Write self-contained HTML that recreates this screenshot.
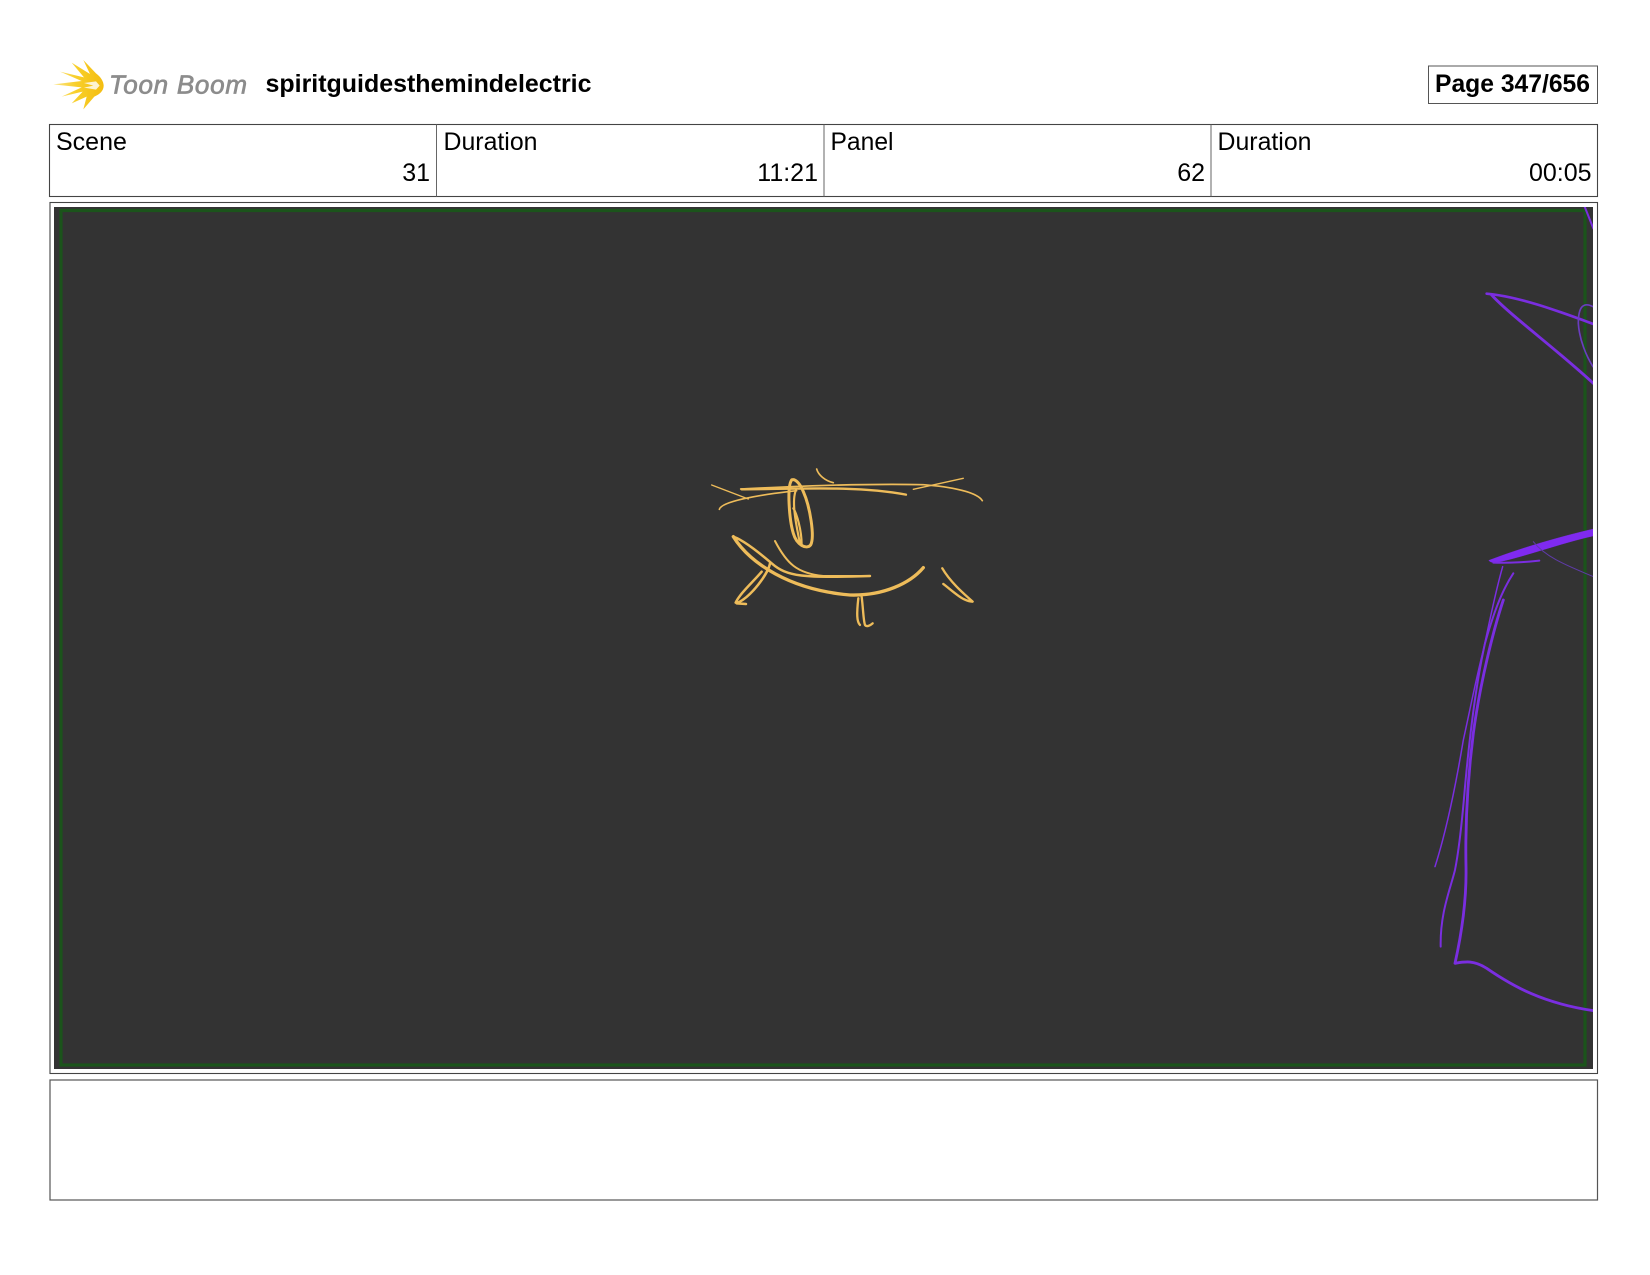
<!DOCTYPE html>
<html><head><meta charset="utf-8"><style>
html,body{margin:0;padding:0;background:#fff;width:1650px;height:1275px;overflow:hidden}
svg{display:block}
text{font-family:"Liberation Sans",sans-serif;fill:#000}
.s{font-size:25px}
.b{font-size:25px;font-weight:bold}
.y path{fill:none;stroke:#eebc5a;stroke-linecap:round;stroke-linejoin:round}
.p path{fill:none;stroke:#7a2de0;stroke-linecap:round;stroke-linejoin:round}
</style></head><body>
<svg width="1650" height="1275" viewBox="0 0 1650 1275" xmlns="http://www.w3.org/2000/svg">
<defs>
<clipPath id="c"><rect x="54" y="207" width="1539" height="862"/></clipPath>
<linearGradient id="g" x1="0" x2="1" y1="0" y2="0"><stop offset="0" stop-color="#fbe58a"/><stop offset=".45" stop-color="#f8cf2a"/><stop offset="1" stop-color="#f4bd10"/></linearGradient>
<filter id="bl" x="-10%" y="-10%" width="120%" height="120%"><feGaussianBlur stdDeviation=".6"/></filter>
<filter id="bs" x="-5%" y="-5%" width="110%" height="110%"><feGaussianBlur stdDeviation=".35"/></filter>
</defs>
<rect width="1650" height="1275" fill="#fff"/>

<!-- logo -->
<g transform="translate(40,50) scale(.3333)" filter="url(#bl)">
<path fill="url(#g)" d="M40 103 L125 93 L60 65 L132 82 L95 38 L150 72 L130 30 L168 70 C182 80 191 95 191 107 C191 122 180 133 163 140 L130 178 L140 140 L95 160 L128 125 L65 140 L125 112 Z"/>
<path fill="#fff" d="M132 99 L168 94 L179 107 L168 119 L132 113 L160 107 Z" opacity=".8"/>
</g>
<text x="109" y="93.500" font-size="26" font-style="italic" textLength="138" lengthAdjust="spacing" filter="url(#bs)" style="fill:#8c8c8c;stroke:#8c8c8c;stroke-width:.7">Toon Boom</text>

<text class="b" x="265.500" y="92" textLength="326" lengthAdjust="spacingAndGlyphs">spiritguidesthemindelectric</text>

<rect x="1428.500" y="66" width="169" height="37.500" fill="none" stroke="#555" stroke-width="1"/>
<text class="b" x="1435" y="92" textLength="155" lengthAdjust="spacingAndGlyphs">Page 347/656</text>

<!-- info table -->
<rect x="49.500" y="124.500" width="1548" height="72" fill="none" stroke="#444" stroke-width="1.100"/>
<path d="M436.500 124.500V196.500M824 124.500V196.500M1211 124.500V196.500" stroke="#666" stroke-width="1" fill="none"/>
<text class="s" x="56" y="150">Scene</text>
<text class="s" x="443.500" y="150" textLength="94" lengthAdjust="spacingAndGlyphs">Duration</text>
<text class="s" x="830.500" y="150" textLength="63" lengthAdjust="spacingAndGlyphs">Panel</text>
<text class="s" x="1217.500" y="150" textLength="94" lengthAdjust="spacingAndGlyphs">Duration</text>
<text class="s" x="430" y="181" text-anchor="end">31</text>
<text class="s" x="818" y="181" text-anchor="end">11:21</text>
<text class="s" x="1205" y="181" text-anchor="end">62</text>
<text class="s" x="1591.500" y="181" text-anchor="end">00:05</text>

<!-- panel -->
<rect x="50" y="202.500" width="1547.500" height="871" fill="#fff" stroke="#444" stroke-width="1.100"/>
<rect x="54" y="207" width="1539" height="862" fill="#333333"/>
<rect x="61" y="210.500" width="1524" height="854.500" fill="none" stroke="#1b541b" stroke-width="3.200"/>

<g clip-path="url(#c)" filter="url(#bs)">
<g class="y" transform="translate(690,450) scale(.3333)">
<path stroke-width="5" d="M152 117 C300 110 500 100 700 104 C780 110 860 125 877 152"/>
<path stroke-width="7" d="M155 118 C300 118 500 105 648 134"/>
<path stroke-width="4" d="M65 105 L175 147"/>
<path stroke-width="5" d="M88 178 C95 155 200 135 320 122"/>
<path stroke-width="4" d="M670 118 L820 85"/>
<path stroke-width="5" d="M380 57 C385 75 405 92 430 98"/>
<path stroke-width="9" d="M305 90 C290 110 298 210 310 250 C320 285 350 300 362 285 C375 260 360 170 340 125 C330 100 315 85 305 90"/>
<path stroke-width="6.500" d="M318 120 C305 150 315 210 330 280 M310 175 C320 190 335 240 335 285"/>
<path stroke-width="10" d="M130 260 C180 340 300 420 480 435 C580 438 660 400 700 353"/>
<path stroke-width="7.500" d="M130 260 C160 270 210 310 245 340 C290 380 340 385 540 378"/>
<path stroke-width="6" d="M255 273 C290 340 320 370 400 378 L540 378"/>
<path stroke-width="7.500" d="M240 340 C235 370 185 440 140 460 L168 462 M215 365 C190 395 150 430 137 458"/>
<path stroke-width="7" d="M515 440 C520 480 520 510 525 525 C530 532 540 527 548 520 M505 445 C500 490 500 515 510 525"/>
<path stroke-width="7" d="M757 355 C780 395 820 430 848 455 C820 455 790 425 760 402"/>
</g>
<g class="p" transform="translate(1420,200) scale(.3333)">
<path stroke-width="6" d="M494 20 L520 85"/>
<path stroke-width="8" d="M200 281 C300 290 420 335 520 372"/>
<path stroke-width="8.500" d="M215 285 C270 345 400 440 520 550"/>
<path stroke-width="5" style="stroke:#6a3cc0" d="M519 320 C490 305 475 320 475 370 C478 420 500 470 519 500"/>
<path style="fill:#7f2cf0;stroke:#7f2cf0" stroke-width="1" d="M207 1081 C300 1045 420 1010 520 987 L520 1008 C420 1030 300 1075 225 1088 C215 1088 207 1085 207 1081 Z"/>
<path stroke-width="6" d="M220 1088 C270 1090 320 1086 358 1082"/>
<path stroke-width="3" style="stroke:#5f3ba8" d="M340 1025 C380 1075 450 1100 520 1130"/>
</g>
<g class="p" transform="translate(1420,600) scale(.3333)">
<path stroke-width="4.500" d="M248 -100 C225 -20 210 60 190 150 C165 250 150 330 130 420 C110 540 80 690 45 800"/>
<path stroke-width="6" d="M280 -80 C240 -20 215 60 195 130 C175 220 155 340 135 560 C125 680 115 760 105 810 C90 870 60 940 62 1040"/>
<path stroke-width="8.500" d="M250 0 C220 90 180 250 160 400 C145 520 135 650 138 800 C140 900 125 1000 105 1090 C135 1085 160 1080 200 1105 C280 1160 370 1210 520 1232"/>
</g>
</g>

<!-- notes -->
<rect x="50" y="1080" width="1547.500" height="120" fill="none" stroke="#555" stroke-width="1.200"/>
</svg>
</body></html>
